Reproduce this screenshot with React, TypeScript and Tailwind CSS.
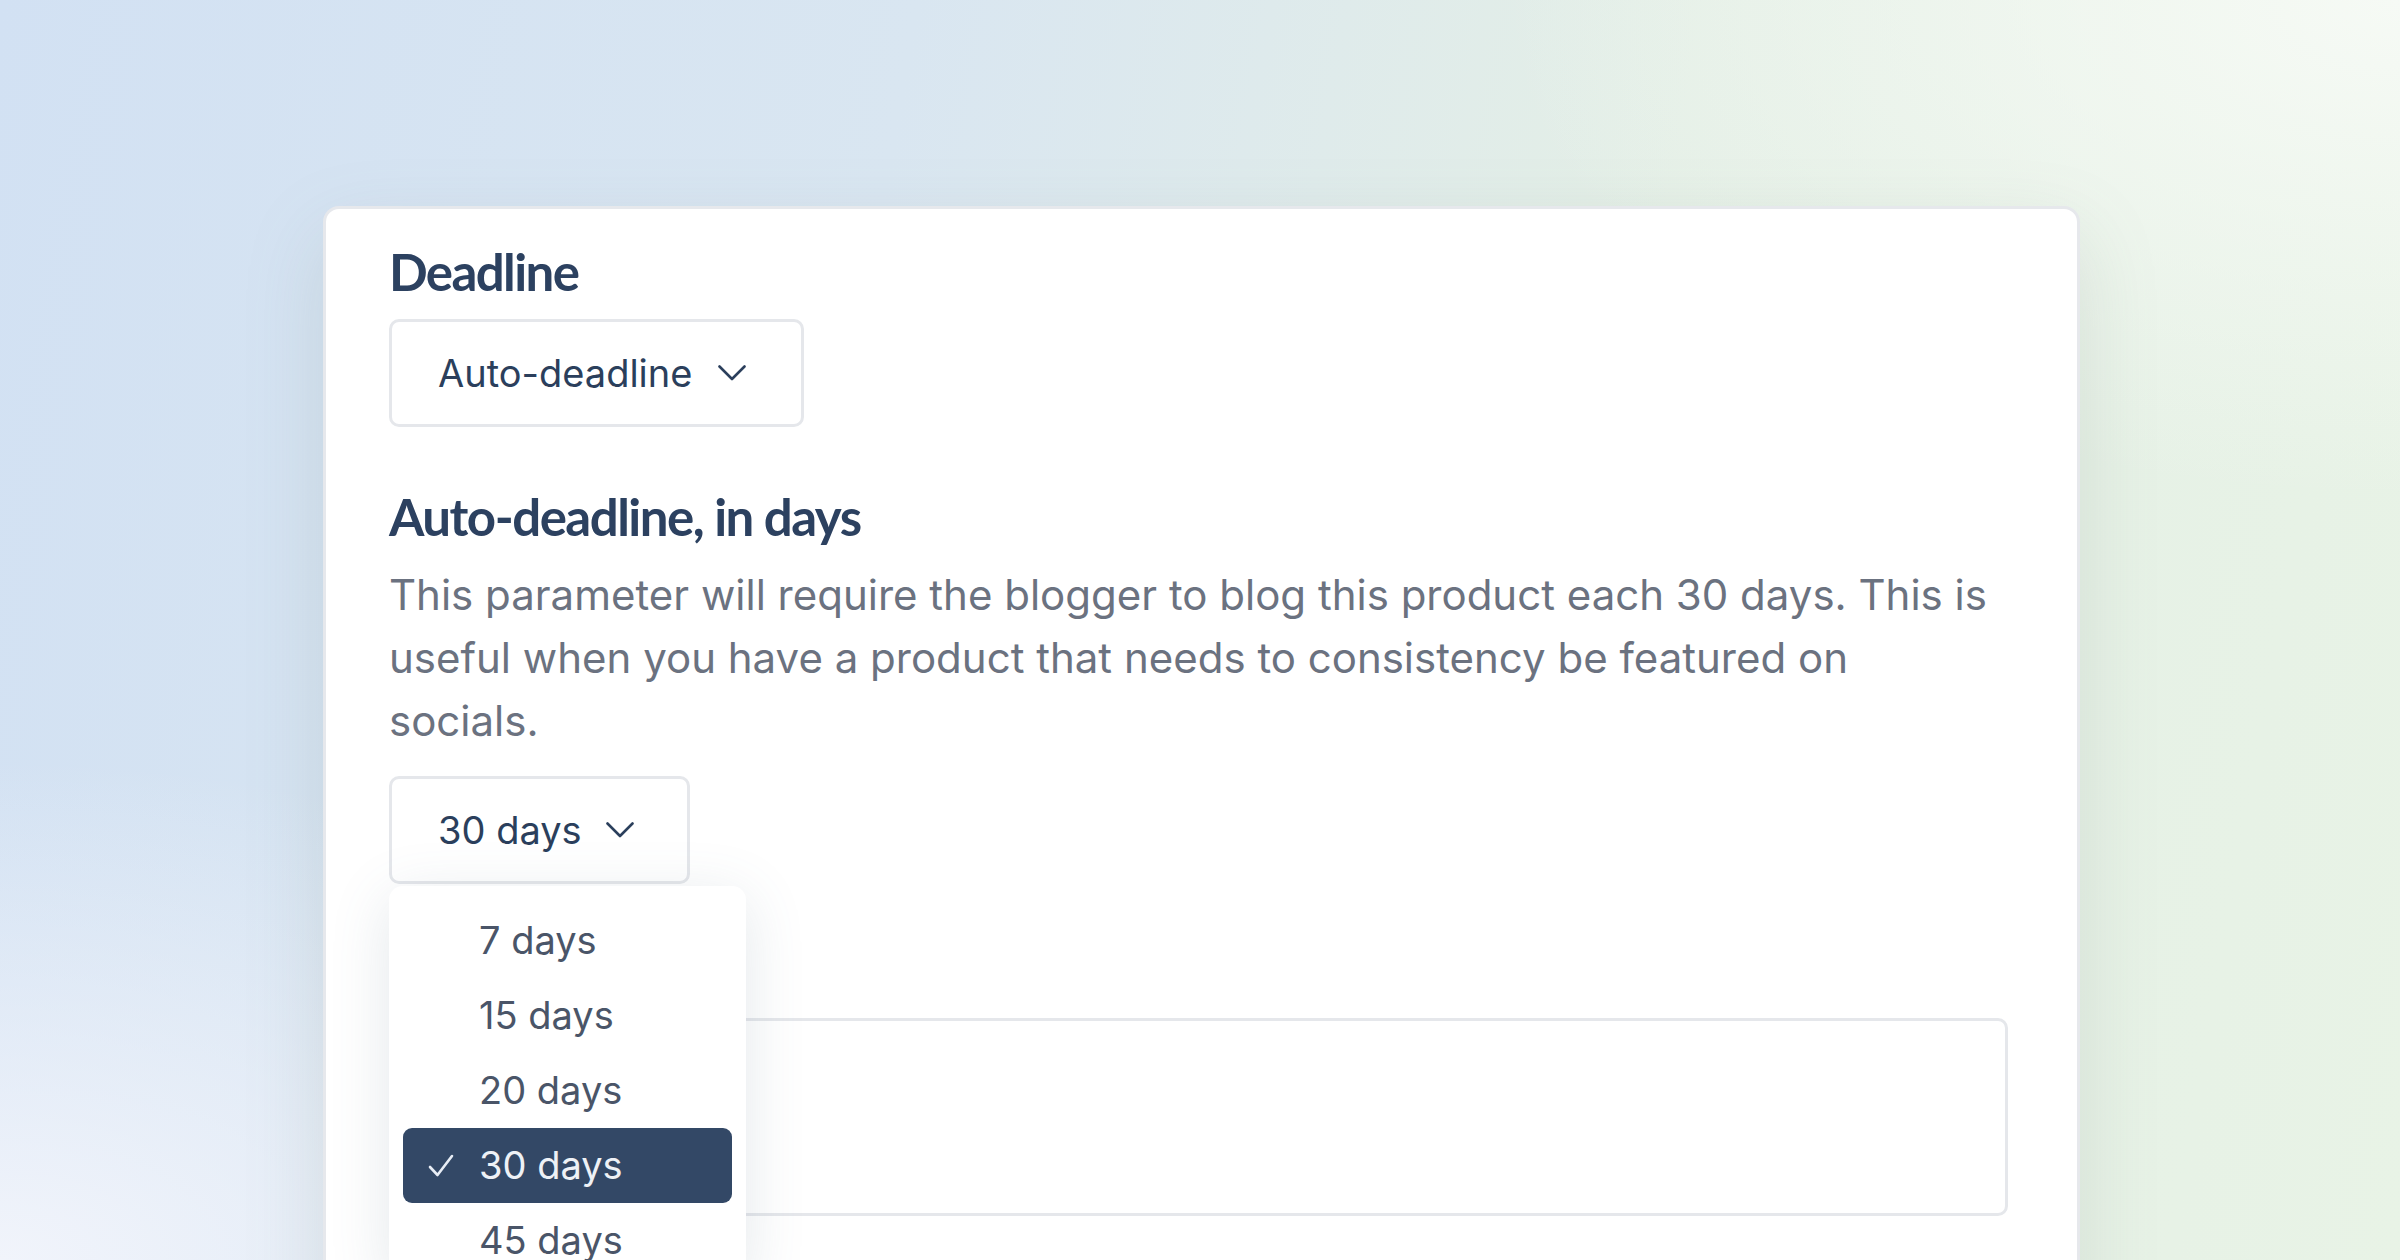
import { useState } from 'react';

const options = ['7 days', '15 days', '20 days', '30 days', '45 days'];

const headingFont = { fontFamily: 'Lato, "Noto Sans", sans-serif' };

function Chevron() {
  return (
    <svg width="28" height="16" viewBox="0 0 28 16" fill="none" className="shrink-0">
      <path d="M1.5 1.5 14 14 26.5 1.5" stroke="#2b3f5c" strokeWidth="2.6" strokeLinecap="round" strokeLinejoin="round" />
    </svg>
  );
}

function Check() {
  return (
    <svg width="26" height="24" viewBox="0 0 26 24" fill="none">
      <path d="M2 13 9.5 21 24 2" stroke="#e8edf5" strokeWidth="2.6" strokeLinecap="round" strokeLinejoin="round" />
    </svg>
  );
}

export default function App() {
  const [selected] = useState('30 days');

  return (
    <div
      className="h-[1260px] w-[2400px] overflow-hidden bg-[radial-gradient(ellipse_900px_500px_at_0%_100%,#f1f4fb_0%,rgba(241,244,251,0)_100%),radial-gradient(ellipse_900px_500px_at_100%_0%,#f6faf5_0%,rgba(246,250,245,0)_100%),linear-gradient(100deg,#d2e1f3_0%,#d9e6f1_35%,#e4efe6_65%,#e8f3e6_100%)]"
      style={{ fontFamily: 'Inter, "Noto Sans", sans-serif' }}
    >
      <div className="ml-[323px] mt-[206px] w-[1757px] rounded-[16px] border-[3px] border-[#e6e8ec] bg-white pl-[63px] pr-[69px] pt-[29px] shadow-[0_30px_80px_rgba(120,140,130,0.18)]">
        {/* Deadline */}
        <h2 className="text-[51px] font-bold leading-[68px] tracking-[-1.6px] text-[#2c4160]" style={headingFont}>
          Deadline
        </h2>
        <button className="mt-[13px] flex h-[108px] w-[415px] items-center gap-[26px] rounded-[10px] border-[3px] border-[#e5e7eb] bg-white pl-[46px] text-[38px] text-[#2b3f5c]">
          <span>Auto-deadline</span>
          <Chevron />
        </button>

        {/* Auto-deadline, in days */}
        <h2 className="mt-[56px] text-[51px] font-bold leading-[68px] tracking-[-1.5px] text-[#2c4160]" style={headingFont}>
          Auto-deadline, in days
        </h2>
        <p className="mt-[12px] text-[42px] leading-[63px] text-[#6b7280]">
          This parameter will require the blogger to blog this product each 30 days. This is
          useful when you have a product that needs to consistency be featured on socials.
        </p>

        <div className="relative mt-[24px]">
          <button className="flex h-[108px] w-[301px] items-center gap-[24px] rounded-[10px] border-[3px] border-[#e5e7eb] bg-white pl-[46px] text-[38px] text-[#2b3f5c]">
            <span>{selected}</span>
            <Chevron />
          </button>

          {/* Open menu */}
          <div className="absolute left-0 top-[110px] z-10 w-[357px] rounded-[14px] bg-white px-[14px] pt-[17px] shadow-[0_12px_60px_rgba(90,110,130,0.16)]">
            {options.map((o) => (
              <div
                key={o}
                className={
                  o === selected
                    ? 'flex h-[75px] items-center rounded-[9px] bg-[#334866] pl-[25px] text-[38px] text-[#eef1f6]'
                    : 'flex h-[75px] items-center rounded-[9px] pl-[25px] text-[38px] text-[#4a5568]'
                }
              >
                <span className="w-[51px]">{o === selected && <Check />}</span>
                <span>{o}</span>
              </div>
            ))}
          </div>

          {/* Field underneath the menu */}
          <div className="mt-[134px] h-[198px] w-full rounded-[10px] border-[3px] border-[#e5e7eb] bg-white" />
        </div>
        <div className="h-[300px]" />
      </div>
    </div>
  );
}
